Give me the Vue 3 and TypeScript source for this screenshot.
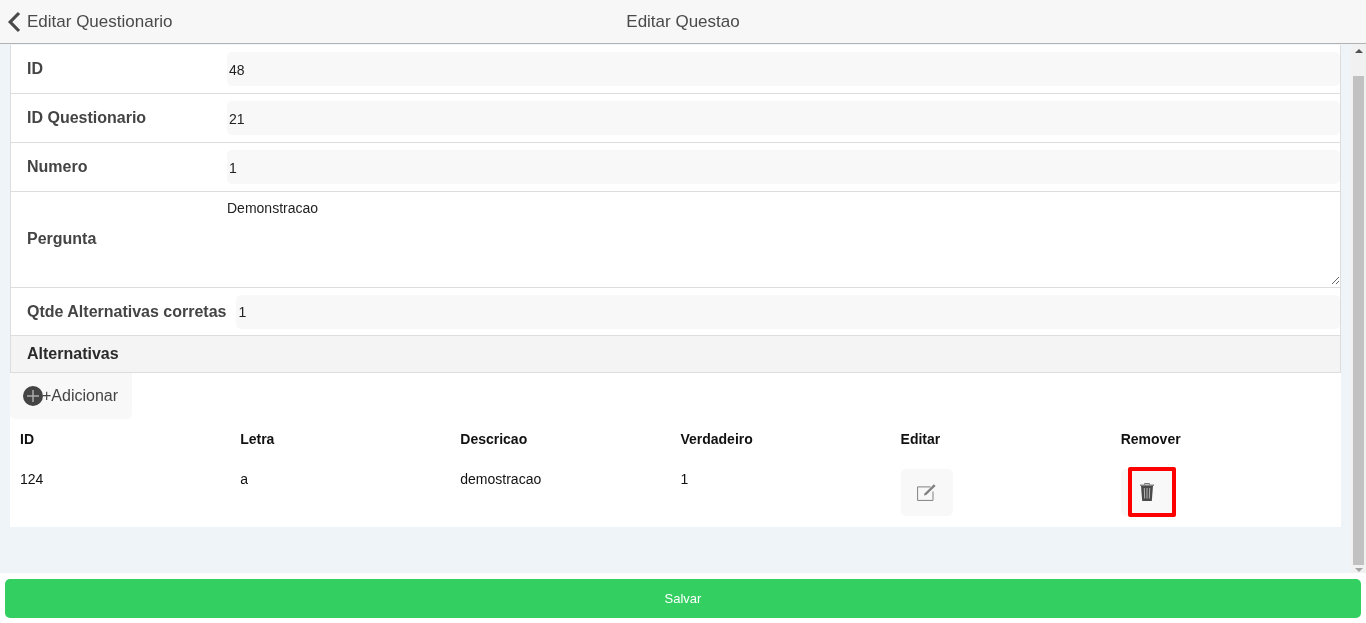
<script setup lang="ts">
const rows = [
  { label: 'ID', value: '48' },
  { label: 'ID Questionario', value: '21' },
  { label: 'Numero', value: '1' },
]
const cols = ['ID', 'Letra', 'Descricao', 'Verdadeiro', 'Editar', 'Remover']
const cells = ['124', 'a', 'demostracao', '1']
</script>

<template>
  <div class="page">
    <header class="navbar">
      <div class="back">
        <svg class="chev" width="14" height="22" viewBox="0 0 14 22"><path d="M12 2 L3.2 11 L12 20" fill="none" stroke="#4a4a4a" stroke-width="3.2" /></svg>
        <span>Editar Questionario</span>
      </div>
      <div class="title">Editar Questao</div>
    </header>

    <div class="middle">
      <main class="content">
        <section class="card">
          <div v-for="r in rows" :key="r.label" class="row">
            <label class="label">{{ r.label }}</label>
            <input class="field" :value="r.value" />
          </div>
          <div class="row row-text">
            <label class="label">Pergunta</label>
            <textarea class="area">Demonstracao</textarea>
          </div>
          <div class="row row-qtde">
            <label class="label auto">Qtde Alternativas corretas</label>
            <input class="field" value="1" />
          </div>
          <div class="section-head">Alternativas</div>
          <button class="add">
            <svg width="20" height="20" viewBox="0 0 20 20"><circle cx="10" cy="10" r="10" fill="#444" /><path d="M10 4v12M4 10h12" stroke="#aaa" stroke-width="1.5" /></svg><span class="add-text">+Adicionar</span>
          </button>
          <div class="grid heads">
            <div v-for="c in cols" :key="c">{{ c }}</div>
          </div>
          <div class="grid body">
            <div v-for="c in cells" :key="c" class="cell">{{ c }}</div>
            <div><button class="icon-btn">
              <svg width="20" height="20" viewBox="0 0 20 20"><path d="M13.5 3.9H.6V17.4H16V8.5" fill="none" stroke="#808080" stroke-width="1" /><path d="M7 12.4L7.5 10.4 16.9 1.2 18.6 2.9 9.2 12Z" fill="#808080" /></svg>
            </button></div>
            <div class="trash-cell"><button class="icon-btn">
              <svg class="trash" width="14" height="18" viewBox="0 0 14 18"><path d="M4.5 1.6V.5h5v1.1" fill="none" stroke="#777" stroke-width="1" /><path d="M0 1.6h14v1.2H0z" fill="#666" /><path d="M1 3h12l-1.2 15H2.2z" fill="#4a4a4a" /><path d="M4.3 5l.4 10.5M7 5v10.5M9.7 5l-.4 10.5" stroke="#b5b5b5" stroke-width="1" /></svg>
            </button><span class="highlight"></span></div>
          </div>
        </section>
      </main>
      <div class="scrollbar">
        <span class="arrow up"></span>
        <span class="thumb"></span>
        <span class="arrow down"></span>
      </div>
    </div>

    <footer class="footer">
      <button class="save">Salvar</button>
    </footer>
  </div>
</template>

<style>
html, body { margin: 0; padding: 0; overflow: hidden; }
</style>

<style scoped>
.page {
  width: 1366px;
  height: 623px;
  display: flex;
  flex-direction: column;
  font-family: "Liberation Sans", Arial, sans-serif;
  overflow: hidden;
  will-change: transform;
}
.navbar {
  height: 44px;
  box-sizing: border-box;
  flex: none;
  background: #f7f7f7;
  border-bottom: 1px solid #b2b2b2;
  display: grid;
  grid-template-columns: 1fr auto 1fr;
  align-items: center;
  color: #4a4a4a;
  font-size: 17px;
}
.back { display: flex; align-items: center; padding-left: 7px; gap: 6px; }
.chev { flex: none; }
.title { grid-column: 2; }
.middle { flex: 1; display: flex; min-height: 0; background: #eff4f8; }
.content { flex: 1; padding: 1px 10px 0; min-width: 0; }
.card { width: 1331px; height: 482px; background: #fff; box-sizing: border-box; }
.row {
  display: flex;
  align-items: center;
  height: 49px;
  box-sizing: border-box;
  padding: 0 0 0 16px;
  border-left: 1px solid #ddd;
  border-right: 1px solid #ddd;
  border-bottom: 1px solid #ddd;
}
.label {
  width: 200px;
  flex: none;
  font-size: 16px;
  font-weight: 700;
  color: #444;
}
.label.auto { width: auto; margin-right: 10px; white-space: nowrap; }
.field {
  flex: 1;
  min-width: 0;
  height: 34px;
  box-sizing: border-box;
  border: 0;
  outline: 0;
  background: #f8f8f8;
  border-radius: 5px;
  padding: 2px 2px 0;
  font: 14px "Liberation Sans", Arial, sans-serif;
  color: #222;
}
.row-text { height: 96px; align-items: stretch; }
.row-text .label { align-self: center; margin-top: -2px; }
.area {
  flex: 1;
  min-width: 0;
  box-sizing: border-box;
  border: 0;
  outline: 0;
  background: #fff;
  padding: 8px 0 0;
  font: 14px/1.2 "Liberation Sans", Arial, sans-serif;
  color: #222;
  height: 93px;
}
.row-qtde { height: 48px; }
.row-qtde .field { padding-top: 0; }
.section-head {
  height: 37px;
  box-sizing: border-box;
  background: #f4f4f4;
  border-left: 1px solid #ddd;
  border-right: 1px solid #ddd;
  border-bottom: 1px solid #ddd;
  padding-left: 16px;
  display: flex;
  align-items: center;
  font-size: 16px;
  font-weight: 700;
  color: #2b2b2b;
}
.add {
  display: flex;
  align-items: center;
  width: 122px;
  height: 46px;
  box-sizing: border-box;
  border: 0;
  border-radius: 0 0 5px 5px;
  background: #f8f8f8;
  padding: 0 0 0 13px;
  font: 16px "Liberation Sans", Arial, sans-serif;
  color: #444;
}
.add-text { margin-left: -1px; }
.grid {
  display: grid;
  grid-template-columns: 220.15px 220.15px 220.15px 220.15px 220.15px 1fr;
  padding-left: 10px;
  font-size: 14px;
  color: #111;
}
.heads { font-weight: 700; margin-top: 12px; height: 16px; line-height: 16px; }
.body { margin-top: 22px; }
.cell { padding-top: 2px; line-height: 16px; }
.icon-btn {
  width: 52px;
  height: 47px;
  border: 0;
  border-radius: 5px;
  background: #f8f8f8;
  padding: 0;
  display: flex;
  align-items: center;
  justify-content: center;
}
.trash { margin-top: -1px; }
.trash-cell { position: relative; }
.highlight {
  position: absolute;
  left: 7px;
  top: -2px;
  width: 48px;
  height: 50px;
  box-sizing: border-box;
  border: 4px solid #f00;
  border-radius: 2px;
}
.scrollbar {
  width: 15px;
  flex: none;
  background: #f1f1f1;
  display: flex;
  flex-direction: column;
  align-items: center;
}
.thumb { width: 11px; height: 489px; background: #c1c1c1; margin-top: 23px; flex: none; }
.arrow { width: 0; height: 0; border-left: 4px solid transparent; border-right: 4px solid transparent; flex: none; }
.arrow.up { border-bottom: 4px solid #505050; margin-top: 5px; }
.arrow.down { border-top: 4px solid #a3a3a3; margin-top: 3px; }
.footer {
  height: 50px;
  flex: none;
  background: #fff;
  box-sizing: border-box;
  padding: 6px 5px 5px;
}
.save {
  display: block;
  width: 1356px;
  height: 39px;
  border: 0;
  border-radius: 5px;
  background: #33cf60;
  color: #fff;
  font: 13px "Liberation Sans", Arial, sans-serif;
}
</style>
